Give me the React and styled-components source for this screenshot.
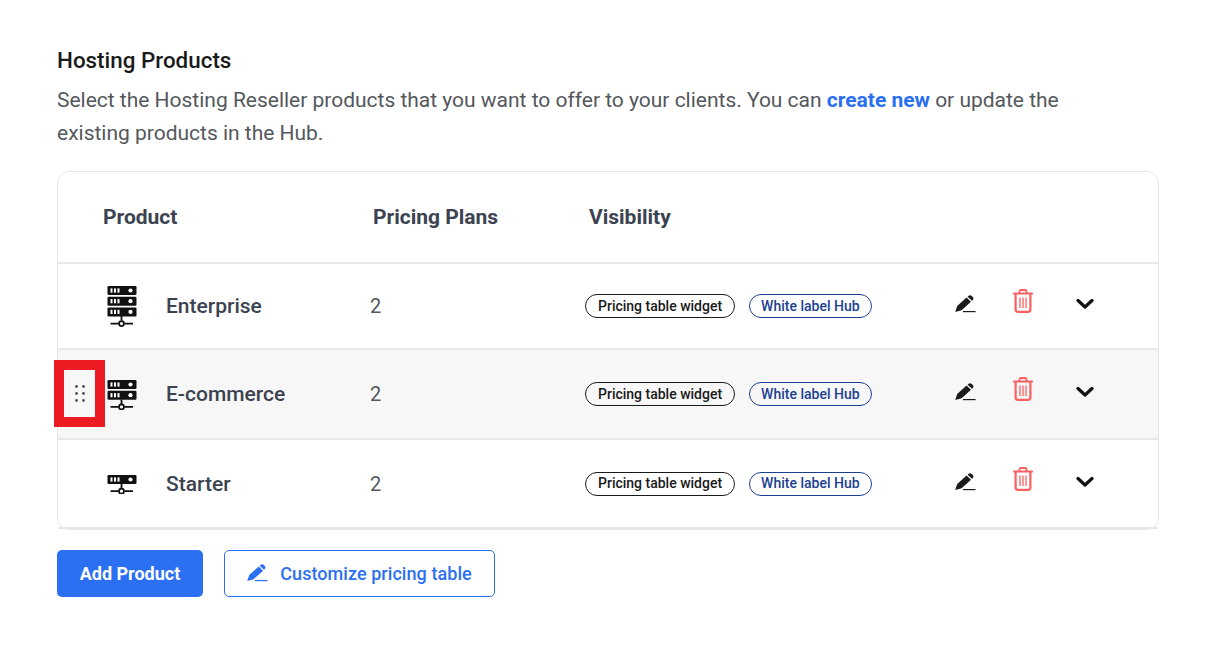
import React from 'react';
import styled, { createGlobalStyle } from 'styled-components';

const GlobalStyle = createGlobalStyle`
  html, body {
    margin: 0;
    padding: 0;
    background: #ffffff;
  }
  body {
    font-family: Roboto, "Liberation Sans", sans-serif;
    color: #3e4347;
  }
`;

const Page = styled.div`
  width: 1220px;
  height: 648px;
  box-sizing: border-box;
  padding: 47px 61px 0 57px;
  overflow: hidden;
`;

const Title = styled.h2`
  margin: 0;
  font-size: 22.4px;
  line-height: 27px;
  font-weight: 500;
  color: #1a1a1a;
`;

const Description = styled.p`
  margin: 10px 0 21px;
  width: 1040px;
  font-size: 21px;
  line-height: 33px;
  letter-spacing: -0.01px;
  color: #54585c;
`;

const Link = styled.a`
  color: #2b6ff2;
  font-weight: 700;
`;

const Card = styled.div`
  border: 1px solid #e6e6e6;
  border-radius: 12px;
  position: relative;
`;

const HeaderRow = styled.div`
  display: flex;
  align-items: center;
  height: 90px;
  padding-left: 45px;
  border-bottom: 2px solid #e8e8e8;
`;

const HeaderCell = styled.div`
  width: ${props => props.$width}px;
  font-size: 21px;
  font-weight: 700;
  color: #3c4350;
`;

const Row = styled.div`
  position: relative;
  display: flex;
  align-items: center;
  height: ${props => props.$height}px;
  padding-left: 49px;
  background: ${props => (props.$active ? '#f7f7f7' : 'transparent')};
  border-bottom: 2px solid #e8e8e8;
`;

const IconCell = styled.div`
  width: 59px;
  display: flex;
  padding-top: 2px;
`;

const Name = styled.div`
  width: 204px;
  font-size: 21px;
  font-weight: 500;
  color: #3c4350;
`;

const Plans = styled.div`
  width: 215px;
  font-size: 20px;
  color: #54585c;
`;

const Chips = styled.div`
  width: 370px;
  display: flex;
  gap: 14px;
`;

const Chip = styled.span`
  box-sizing: border-box;
  height: 24px;
  padding: 0 ${props => (props.$blue ? 11 : 12)}px 1px;
  display: flex;
  align-items: center;
  border: 1px solid ${props => (props.$blue ? '#1c3f94' : '#1a1a1a')};
  border-radius: 12px;
  font-size: 14px;
  font-weight: 500;
  color: ${props => (props.$blue ? '#1c3f94' : '#1a1a1a')};
`;

const Actions = styled.div`
  display: flex;
  align-items: center;
`;

const ActionSlot = styled.div`
  width: ${props => props.$width}px;
  display: flex;
  transform: translateY(${props => props.$shift}px);
`;

const DragHandle = styled.div`
  position: absolute;
  left: -4px;
  top: 10px;
  width: 31px;
  height: 47px;
  border: 10px solid #ed1c24;
  background: #f7f7f7;
  display: flex;
  align-items: center;
  justify-content: center;
`;

const Buttons = styled.div`
  display: flex;
  gap: 21px;
  margin-top: 20px;
`;

const PrimaryButton = styled.button`
  width: 146px;
  height: 47px;
  padding: 0 0 1px;
  border: none;
  border-radius: 5px;
  background: #2b6ff2;
  color: #ffffff;
  font-family: inherit;
  font-size: 18px;
  font-weight: 700;
`;

const OutlineButton = styled.button`
  box-sizing: border-box;
  width: 271px;
  height: 47px;
  padding: 0 0 1px;
  border: 1px solid #2b6ff2;
  border-radius: 5px;
  background: #ffffff;
  color: #2b6ff2;
  font-family: inherit;
  font-size: 18px;
  font-weight: 500;
  letter-spacing: 0.06px;
  display: flex;
  align-items: center;
  justify-content: center;
  gap: 12px;
`;

const ServerIcon = ({ units }) => {
  const pitch = 10.7;
  const bottom = units * pitch;
  return (
    <svg width="30" height={bottom + 9} viewBox={`0 0 30 ${bottom + 9}`}>
      {Array.from({ length: units }, (_, i) => (
        <g key={i}>
          <rect x="0.5" y={i * pitch} width="29" height="9" rx="1.2" fill="#111" />
          <rect x="3.5" y={i * pitch + 2.4} width="2" height="4.2" fill="#fff" />
          <rect x="7" y={i * pitch + 2.4} width="2" height="4.2" fill="#fff" />
          <rect x="10.5" y={i * pitch + 2.4} width="2" height="4.2" fill="#fff" />
          <circle cx="23.5" cy={i * pitch + 4.5} r="2.1" fill="#fff" />
        </g>
      ))}
      <path
        d={`M14.5 ${bottom - 2}V${bottom + 2.5}M3.5 ${bottom + 5.5}H11.5M17.5 ${bottom + 5.5}H26`}
        stroke="#111"
        strokeWidth="1.8"
        fill="none"
      />
      <circle cx="14.5" cy={bottom + 5.5} r="2.5" fill="none" stroke="#111" strokeWidth="1.8" />
    </svg>
  );
};

const PencilIcon = ({ color }) => (
  <svg width="21" height="18" viewBox="0 0 21 18">
    <path d="M0.2 17L2.2 11L11.6 2.6L16 6.8L6.6 15.2Z" fill={color} />
    <path d="M12.6 1.7L13.4 1C14.5 .1 15.8 .2 16.8 1L17.8 2C18.7 3 18.7 4.1 17.8 5L17 5.8Z" fill={color} />
    <path d="M8 16.6H20.5" stroke={color} strokeWidth="1.2" />
  </svg>
);

const TrashIcon = () => (
  <svg width="20" height="24" viewBox="0 0 20 24" fill="none" stroke="#fb6060">
    <path d="M1 4.5H19" strokeWidth="2.2" strokeLinecap="round" />
    <path d="M6.5 4V2.4C6.5 1.6 7.1 1 7.9 1H12.1C12.9 1 13.5 1.6 13.5 2.4V4" strokeWidth="1.8" />
    <path d="M2.6 5V20.5C2.6 21.9 3.6 22.8 4.9 22.8H15.1C16.4 22.8 17.4 21.9 17.4 20.5V5" strokeWidth="2.2" />
    <path d="M7 8.5V19M10 8.5V19M13 8.5V19" strokeWidth="1.3" />
  </svg>
);

const ChevronIcon = () => (
  <svg width="18" height="12" viewBox="0 0 18 12" fill="none">
    <path d="M2 2.5L9 9L16 2.5" stroke="#111" strokeWidth="3.2" strokeLinecap="round" strokeLinejoin="round" />
  </svg>
);

const DotsIcon = () => (
  <svg width="10" height="17" viewBox="0 0 10 17" fill="#4c5258">
    {[1.5, 8.5, 15.5].map(y => (
      <g key={y}>
        <circle cx="1.5" cy={y} r="1.4" />
        <circle cx="8.5" cy={y} r="1.4" />
      </g>
    ))}
  </svg>
);

const products = [
  { name: 'Enterprise', units: 3, height: 84 },
  { name: 'E-commerce', units: 2, height: 88, active: true },
  { name: 'Starter', units: 1, height: 87 }
];

const App = () => (
  <Page>
    <GlobalStyle />
    <Title>Hosting Products</Title>
    <Description>
      Select the Hosting Reseller products that you want to offer to your clients. You can{' '}
      <Link>create new</Link> or update the existing products in the Hub.
    </Description>
    <Card>
      <HeaderRow>
        <HeaderCell $width={270}>Product</HeaderCell>
        <HeaderCell $width={216}>Pricing Plans</HeaderCell>
        <HeaderCell $width={200}>Visibility</HeaderCell>
      </HeaderRow>
      {products.map(product => (
        <Row key={product.name} $height={product.height} $active={product.active}>
          {product.active && (
            <DragHandle>
              <DotsIcon />
            </DragHandle>
          )}
          <IconCell>
            <ServerIcon units={product.units} />
          </IconCell>
          <Name>{product.name}</Name>
          <Plans>2</Plans>
          <Chips>
            <Chip>Pricing table widget</Chip>
            <Chip $blue>White label Hub</Chip>
          </Chips>
          <Actions>
            <ActionSlot $width={58} $shift={-2}>
              <PencilIcon color="#1a1a1a" />
            </ActionSlot>
            <ActionSlot $width={63} $shift={-5}>
              <TrashIcon />
            </ActionSlot>
            <ActionSlot $width={30} $shift={-2}>
              <ChevronIcon />
            </ActionSlot>
          </Actions>
        </Row>
      ))}
    </Card>
    <Buttons>
      <PrimaryButton>Add Product</PrimaryButton>
      <OutlineButton>
        <PencilIcon color="#2b6ff2" />
        Customize pricing table
      </OutlineButton>
    </Buttons>
  </Page>
);

export default App;
